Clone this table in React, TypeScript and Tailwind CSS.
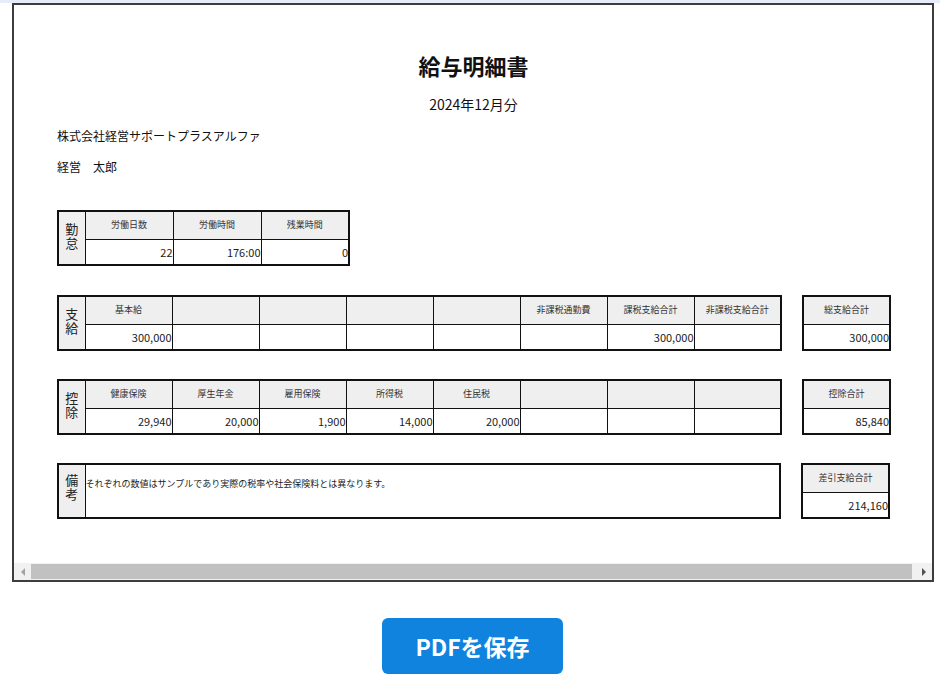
import React from "react";

const FONT = "font-['Noto_Sans_CJK_JP','Noto_Sans',sans-serif]";

function Label({ text }: { text: string }) {
  return (
    <td
      rowSpan={2}
      className="w-[27px] border border-[#111] bg-[#efefef] p-0 text-center align-middle text-[13px] leading-[14px] text-[#222]"
    >
      <div className="flex justify-center pb-[4px]">
        <span className="block w-[13px] break-all">{text}</span>
      </div>
    </td>
  );
}

function HeadCell({ text }: { text: string }) {
  return (
    <td className="h-[28px] border border-[#111] bg-[#efefef] p-0 text-center align-middle text-[9px] leading-[12px] text-[#333]">
      {text}
    </td>
  );
}

function ValCell({ text }: { text: string }) {
  return (
    <td className="h-[26px] border border-[#111] bg-white p-0 text-right align-middle text-[11px] leading-[14px] text-[#222]">
      {text}
    </td>
  );
}

function Section({
  label,
  heads,
  vals,
  colW,
}: {
  label: string;
  heads: string[];
  vals: string[];
  colW: string;
}) {
  return (
    <table className="table-fixed border-collapse border-2 border-[#111]">
      <colgroup>
        <col className="w-[27px]" />
        {heads.map((_, i) => (
          <col key={i} className={colW} />
        ))}
      </colgroup>
      <tbody>
        <tr>
          <Label text={label} />
          {heads.map((h, i) => (
            <HeadCell key={i} text={h} />
          ))}
        </tr>
        <tr>
          {vals.map((v, i) => (
            <ValCell key={i} text={v} />
          ))}
        </tr>
      </tbody>
    </table>
  );
}

function Side({ head, val }: { head: string; val: string }) {
  return (
    <table className="w-[89px] table-fixed border-collapse border-2 border-[#111]">
      <tbody>
        <tr>
          <HeadCell text={head} />
        </tr>
        <tr>
          <ValCell text={val} />
        </tr>
      </tbody>
    </table>
  );
}

function Scrollbar() {
  return (
    <div className="flex h-[17px] items-center bg-[#f1f1f1]">
      <div className="flex h-[17px] w-[17px] items-center justify-center">
        <div className="h-0 w-0 border-y-[4px] border-r-[4px] border-y-transparent border-r-[#a3a3a3]" />
      </div>
      <div className="h-[15px] flex-1 bg-[#c1c1c1]" />
      <div className="w-[3px]" />
      <div className="flex h-[17px] w-[17px] items-center justify-center">
        <div className="h-0 w-0 border-y-[4px] border-l-[4px] border-y-transparent border-l-[#505050]" />
      </div>
    </div>
  );
}

export default function App() {
  return (
    <div className={`${FONT} min-h-[681px] bg-white`}>
      <div className="h-[3px] bg-[#e7ecfa]" />
      <div className="ml-[12px] w-[922px] border-2 border-[#3d3d3d] bg-white">
        <div className="overflow-hidden">
          <div className="w-[926px] pl-[43px] pt-[44px] pb-[44px] text-[#111]">
            <div className="w-[833px] text-center text-[22px] font-bold leading-[32px]">
              給与明細書
            </div>
            <div className="mt-[13px] w-[833px] text-center text-[14px] leading-[20px]">
              2024年12月分
            </div>
            <div className="mt-[12px] text-[12px] leading-[20px]">
              株式会社経営サポートプラスアルファ
            </div>
            <div className="mt-[11px] text-[12px] leading-[20px]">経営　太郎</div>

            <div className="mt-[33px]">
              <Section
                label="勤怠"
                heads={["労働日数", "労働時間", "残業時間"]}
                vals={["22", "176:00", "0"]}
                colW="w-[88px]"
              />
            </div>

            <div className="mt-[29px] flex items-start gap-[20px]">
              <Section
                label="支給"
                heads={["基本給", "", "", "", "", "非課税通勤費", "課税支給合計", "非課税支給合計"]}
                vals={["300,000", "", "", "", "", "", "300,000", ""]}
                colW="w-[87px]"
              />
              <Side head="総支給合計" val="300,000" />
            </div>

            <div className="mt-[28px] flex items-start gap-[20px]">
              <Section
                label="控除"
                heads={["健康保険", "厚生年金", "雇用保険", "所得税", "住民税", "", "", ""]}
                vals={["29,940", "20,000", "1,900", "14,000", "20,000", "", "", ""]}
                colW="w-[87px]"
              />
              <Side head="控除合計" val="85,840" />
            </div>

            <div className="mt-[28px] flex items-start gap-[20px]">
              <table className="w-[724px] table-fixed border-collapse border-2 border-[#111]">
                <colgroup>
                  <col className="w-[27px]" />
                  <col />
                </colgroup>
                <tbody>
                  <tr>
                    <td className="h-[54px] border border-[#111] bg-[#efefef] p-0 text-center align-middle text-[13px] leading-[14px] text-[#222]">
                      <div className="flex justify-center pb-[8px]">
                        <span className="block w-[13px] break-all">備考</span>
                      </div>
                    </td>
                    <td className="border border-[#111] p-0 pt-[12px] align-top text-[9px] leading-[13px] text-[#222]">
                      それぞれの数値はサンプルであり実際の税率や社会保険料とは異なります。
                    </td>
                  </tr>
                </tbody>
              </table>
              <Side head="差引支給合計" val="214,160" />
            </div>
          </div>
        </div>
        <Scrollbar />
      </div>

      <div className="mt-[36px] flex justify-center pl-[5px]">
        <button className="flex h-[56px] w-[181px] items-center justify-center rounded-[6px] bg-[#1083df] text-[23px] font-bold text-white">
          PDFを保存
        </button>
      </div>
    </div>
  );
}
